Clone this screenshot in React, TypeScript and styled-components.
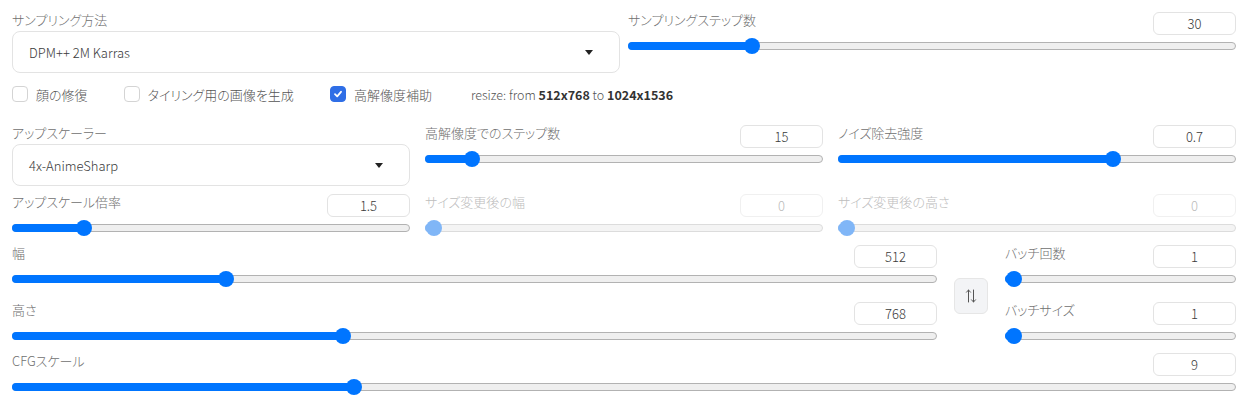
import React from "react";
import styled, { createGlobalStyle } from "styled-components";

const GlobalStyle = createGlobalStyle`
  html, body {
    margin: 0;
    padding: 0;
    background: #ffffff;
  }
  body {
    font-family: "Noto Sans CJK JP", "Noto Sans", sans-serif;
    font-feature-settings: "palt";
    font-size: 13px;
    font-weight: 300;
    color: #333333;
  }
`;

const Page = styled.div`
  width: 1250px;
  box-sizing: border-box;
  padding: 12px 14px 0 12px;
`;

const TwoCols = styled.div`
  display: grid;
  grid-template-columns: 1fr 1fr;
  column-gap: 8px;
  align-items: start;
`;

const ThreeCols = styled.div`
  display: grid;
  grid-template-columns: 1fr 1fr 1fr;
  column-gap: 15px;
  row-gap: 8px;
  align-items: start;
  margin-top: 21px;
`;

const SizeRow = styled.div`
  display: grid;
  grid-template-columns: 1fr 34px 231px;
  column-gap: 17px;
  align-items: center;
  margin-top: 6px;
`;

const Stack = styled.div`
  display: flex;
  flex-direction: column;
  gap: 12px;
`;

const FullRow = styled.div`
  margin-top: 6px;
`;

const Field = styled.div`
  display: flex;
  flex-direction: column;
  min-width: 0;
`;

const Header = styled.div`
  display: flex;
  justify-content: space-between;
  align-items: flex-start;
  height: 23px;
`;

const Label = styled.span<{ $disabled?: boolean }>`
  line-height: 16px;
  font-size: 13px;
  color: ${(p) => (p.$disabled ? "#bdbdbd" : "#707070")};
`;

const NumberBox = styled.div<{ $disabled?: boolean }>`
  width: 83px;
  height: 23px;
  box-sizing: border-box;
  border: 1px solid ${(p) => (p.$disabled ? "#f0f0f0" : "#e3e3e3")};
  border-radius: 6px;
  display: flex;
  align-items: center;
  justify-content: center;
  font-size: 13px;
  color: ${(p) => (p.$disabled ? "#bbbbbb" : "#3a3a3a")};
`;

const SliderArea = styled.div`
  height: 22px;
  display: flex;
  align-items: center;
`;

const Track = styled.div<{ $disabled?: boolean }>`
  position: relative;
  flex: 1;
  height: 8px;
  box-sizing: border-box;
  border-radius: 4px;
  background: ${(p) => (p.$disabled ? "#f4f4f4" : "#efefef")};
  border: 1px solid ${(p) => (p.$disabled ? "#dcdcdc" : "#b2b2b2")};
`;

const Fill = styled.div<{ $disabled?: boolean }>`
  position: absolute;
  left: -1px;
  top: -1px;
  bottom: -1px;
  border-radius: 4px;
  background: ${(p) => (p.$disabled ? "#80b6f7" : "#0075ff")};
`;

const Thumb = styled.div<{ $disabled?: boolean }>`
  position: absolute;
  top: 50%;
  width: 16px;
  height: 16px;
  margin-left: -8px;
  margin-top: -8px;
  border-radius: 50%;
  background: ${(p) => (p.$disabled ? "#80b6f7" : "#0075ff")};
`;

const DropBox = styled.div`
  margin-top: 3px;
  height: 42px;
  box-sizing: border-box;
  border: 1px solid #e3e3e3;
  border-radius: 8px;
  display: flex;
  align-items: center;
  justify-content: space-between;
  padding: 0 26px 0 16px;
  font-size: 13px;
  color: #3a3a3a;
`;

const Caret = styled.span`
  width: 0;
  height: 0;
  border-left: 4px solid transparent;
  border-right: 4px solid transparent;
  border-top: 5px solid #222222;
`;

const CheckRow = styled.div`
  display: flex;
  align-items: center;
  gap: 36px;
  height: 20px;
  margin-top: 11px;
`;

const CheckItem = styled.label`
  display: flex;
  align-items: center;
  gap: 8px;
  color: #555555;
  font-size: 13px;
`;

const Box = styled.span<{ $checked?: boolean }>`
  width: 16px;
  height: 16px;
  box-sizing: border-box;
  border-radius: 4px;
  border: 1px solid ${(p) => (p.$checked ? "#2f6ee6" : "#d4d4d4")};
  background: ${(p) => (p.$checked ? "#2f6ee6" : "#ffffff")};
  display: flex;
  align-items: center;
  justify-content: center;
`;

const ResizeNote = styled.span`
  font-size: 12.5px;
  color: #555555;
  margin-left: 3px;
  b {
    color: #333333;
    font-weight: 700;
  }
`;

const SwapButton = styled.button`
  width: 34px;
  height: 36px;
  padding: 0;
  border: 1px solid #e6e6e6;
  border-radius: 6px;
  background: #f3f4f6;
  display: flex;
  align-items: center;
  justify-content: center;
`;

type SliderProps = {
  label: string;
  value: number;
  min: number;
  max: number;
  shown?: string;
  disabled?: boolean;
};

const SliderField = (props: SliderProps) => {
  const frac = (props.value - props.min) / (props.max - props.min);
  const pos = `calc(8px + (100% - 16px) * ${frac})`;
  return (
    <Field>
      <Header>
        <Label $disabled={props.disabled}>{props.label}</Label>
        <NumberBox $disabled={props.disabled}>{props.shown ?? props.value}</NumberBox>
      </Header>
      <SliderArea>
        <Track $disabled={props.disabled}>
          <Fill $disabled={props.disabled} style={{ width: pos }} />
          <Thumb $disabled={props.disabled} style={{ left: pos }} />
        </Track>
      </SliderArea>
    </Field>
  );
};

const Dropdown = (props: { label: string; value: string }) => (
  <Field>
    <Label>{props.label}</Label>
    <DropBox>
      <span>{props.value}</span>
      <Caret />
    </DropBox>
  </Field>
);

const Check = (props: { label: string; checked?: boolean }) => (
  <CheckItem>
    <Box $checked={props.checked}>
      {props.checked && (
        <svg width="10" height="10" viewBox="0 0 10 10">
          <path d="M2 5.2 L4.2 7.3 L8 2.8" fill="none" stroke="#fff" strokeWidth="1.8" strokeLinecap="round" strokeLinejoin="round" />
        </svg>
      )}
    </Box>
    {props.label}
  </CheckItem>
);

export default function App() {
  return (
    <>
      <GlobalStyle />
      <Page>
        <TwoCols>
          <Dropdown label="サンプリング方法" value="DPM++ 2M Karras" />
          <SliderField label="サンプリングステップ数" value={30} min={1} max={150} />
        </TwoCols>

        <CheckRow>
          <Check label="顔の修復" />
          <Check label="タイリング用の画像を生成" />
          <Check label="高解像度補助" checked />
          <ResizeNote>
            resize: from <b>512x768</b> to <b>1024x1536</b>
          </ResizeNote>
        </CheckRow>

        <ThreeCols>
          <Dropdown label="アップスケーラー" value="4x-AnimeSharp" />
          <SliderField label="高解像度でのステップ数" value={15} min={0} max={150} />
          <SliderField label="ノイズ除去強度" value={0.7} min={0} max={1} />
          <SliderField label="アップスケール倍率" value={1.5} min={1} max={4} />
          <SliderField label="サイズ変更後の幅" value={0} min={0} max={2048} disabled />
          <SliderField label="サイズ変更後の高さ" value={0} min={0} max={2048} disabled />
        </ThreeCols>

        <SizeRow>
          <Stack>
            <SliderField label="幅" value={512} min={64} max={2048} />
            <SliderField label="高さ" value={768} min={64} max={2048} />
          </Stack>
          <SwapButton title="Switch dims">
            <svg width="12" height="18" viewBox="0 0 12 18">
              <path d="M3.5 15 V3 M1.5 5.2 L3.5 3 L5.5 5.2" fill="none" stroke="#555" strokeWidth="1" strokeLinecap="round" strokeLinejoin="round" />
              <path d="M8.5 3 V15 M6.5 12.8 L8.5 15 L10.5 12.8" fill="none" stroke="#555" strokeWidth="1" strokeLinecap="round" strokeLinejoin="round" />
            </svg>
          </SwapButton>
          <Stack>
            <SliderField label="バッチ回数" value={1} min={1} max={100} />
            <SliderField label="バッチサイズ" value={1} min={1} max={8} />
          </Stack>
        </SizeRow>

        <FullRow>
          <SliderField label="CFGスケール" value={9} min={1} max={30} />
        </FullRow>
      </Page>
    </>
  );
}
